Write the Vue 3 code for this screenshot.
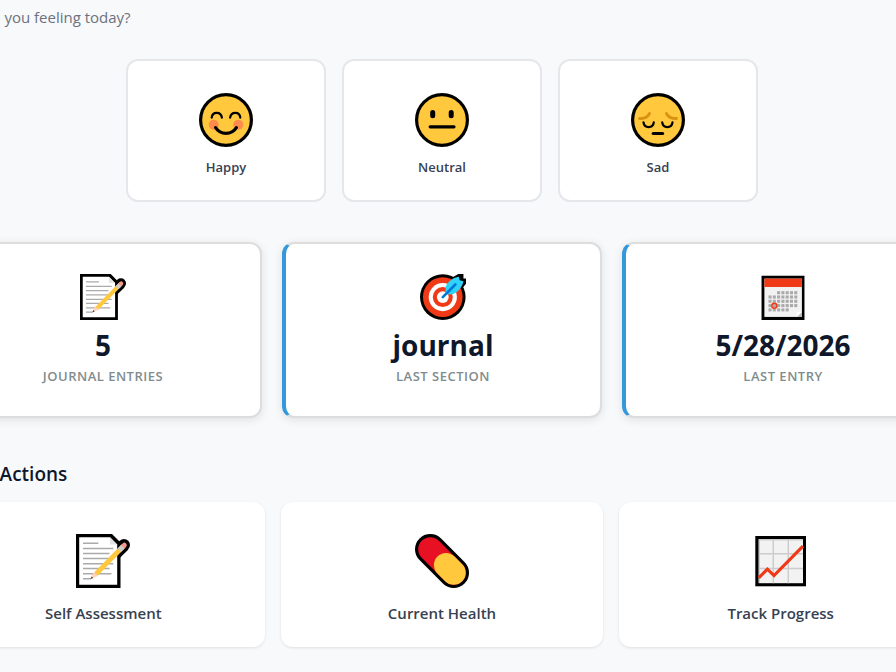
<template>
  <div class="page">
    <main class="dashboard">
      <p class="subtitle">How are you feeling today?</p>

      <div class="mood-options">
        <button v-for="mood in moods" :key="mood.id" type="button" class="mood-card">
          <svg class="icon large" viewBox="0 0 54 54" aria-hidden="true">
            <circle cx="27" cy="27" r="25.4" fill="#ffc83d" stroke="#000" stroke-width="3.2" />
            <g v-if="mood.id === 'happy'" fill="none" stroke="#000" stroke-linecap="round">
              <circle cx="14.7" cy="31.8" r="5" fill="#ff8c4c" stroke="none" />
              <circle cx="39.3" cy="31.8" r="5" fill="#ff8c4c" stroke="none" />
              <path d="M12.7 24.7C13.3 18.2 22 18.2 22.9 24.7M31.1 24.7C32 18.2 40.7 18.2 41.3 24.7" stroke-width="2.2" />
              <path d="M16.6 34.6C21.5 42.3 32.5 42.3 37.4 34.6" stroke-width="3.2" />
            </g>
            <g v-else-if="mood.id === 'neutral'" stroke="#000" stroke-linecap="round">
              <path d="M17.7 19.5V22.7M36.2 19.5V22.7" stroke-width="5" />
              <path d="M15.2 33.8H39" stroke-width="3.2" />
            </g>
            <g v-else fill="none" stroke="#000" stroke-linecap="round">
              <path d="M8.6 25.4C13.5 26 16.8 23.7 18.5 20.6M45.4 25.4C40.5 26 37.2 23.7 35.5 20.6" stroke="#d99312" stroke-width="3" />
              <path d="M12.5 29.4C13.2 35.6 22 35.6 22.8 29.4M31.2 29.4C32 35.6 40.8 35.6 41.5 29.4" stroke-width="2.2" />
              <path d="M22.2 40.5H31.6" stroke-width="3.2" />
            </g>
          </svg>
          <span class="mood-label">{{ mood.label }}</span>
        </button>
      </div>

      <section class="stats">
        <div v-for="stat in stats" :key="stat.label" class="stat-card">
          <svg v-if="stat.icon === 'note'" class="icon" viewBox="0 0 54 54" aria-hidden="true">
            <use href="#note" />
          </svg>
          <svg v-else-if="stat.icon === 'target'" class="icon" viewBox="0 0 45 45" aria-hidden="true">
            <circle cx="22.3" cy="22.6" r="22.3" />
            <path d="M29 5L37.5 0H42.5V4.4H45V9.5L39 17Z" />
            <circle cx="22.3" cy="22.6" r="19.4" fill="#f03a17" />
            <circle cx="22.3" cy="22.6" r="11.8" fill="none" stroke="#fff" stroke-width="4" />
            <circle cx="22.3" cy="22.6" r="5.8" fill="#fff" />
            <path d="M25 20V12.5C27.5 7 32.5 3.3 38 2.7L38.8 6L42.6 7C41.3 12 38 17.8 32 19.7Z" fill="#31d2f7" />
            <path d="M22.3 22.6L34.6 10.3" stroke="#0078d7" stroke-width="2.6" stroke-linecap="round" />
          </svg>
          <svg v-else class="icon" viewBox="0 0 45 45" aria-hidden="true">
            <rect x="1.5" y="1.7" width="42" height="43.3" />
            <rect x="4.3" y="4.5" width="36.7" height="37.5" fill="#f2f2f2" />
            <rect x="4.3" y="4.5" width="36.7" height="8.2" fill="#f03a17" />
            <path d="M36 42L41 37V42Z" fill="#bbb" />
            <path d="M36 42V37H41Z" fill="#fff" />
            <rect v-for="day in days" :key="day.x + '-' + day.y" :x="day.x" :y="day.y" width="3" height="3" fill="#aaa" />
            <circle cx="14" cy="31" r="2.4" fill="none" stroke="#f03a17" stroke-width="1.5" />
          </svg>
          <div class="stat-value">{{ stat.value }}</div>
          <div class="stat-label">{{ stat.label }}</div>
        </div>
      </section>

      <h2 class="section-title">Quick Actions</h2>

      <section class="actions">
        <button v-for="action in actions" :key="action.label" type="button" class="action-card">
          <svg class="icon large" viewBox="0 0 54 54" aria-hidden="true">
            <g v-if="action.icon === 'note'" id="note">
              <path d="M0 0H36L44.5 8.5V54H0Z" />
              <path d="M30 29L48 11.5" stroke="#000" stroke-width="12" />
              <circle cx="48" cy="11" r="6" />
              <path d="M3.2 3.2H34L41.2 10.5V50.8H3.2Z" fill="#fff" />
              <path d="M34 3.2V10.5H41.2Z" fill="#e3e3e3" />
              <path d="M7 9.3H22.3M7 14.5H37.3M7 19.5H33.5M7 24.5H37.3M7 29.7H37.3M7 34.5H33.5M7 39.8H35.5M7 44.8H15" stroke="#aaa" stroke-width="1.4" />
              <path d="M20 40L48 11.5" stroke="#ffc83d" stroke-width="4.8" />
              <path d="M14.5 45L17.8 38L22 42Z" fill="#ffd3b6" />
              <path d="M14.5 45L15.7 42.4L17.2 43.9Z" fill="#333" />
              <path d="M46.8 12.7L48.4 11.1" stroke="#f4978d" stroke-width="4.8" stroke-linecap="round" />
              <path d="M43.3 16.2L46.7 12.8" stroke="#ccc" stroke-width="5" />
            </g>
            <g v-else-if="action.icon === 'pill'" fill="none" stroke-linecap="round">
              <path d="M15.3 15.3L38.7 38.7" stroke="#000" stroke-width="30.6" />
              <path d="M15.3 15.3L38.7 38.7" stroke="#e81123" stroke-width="24.2" />
              <path d="M31 31L38.7 38.7" stroke="#ffc83d" stroke-width="24.2" />
            </g>
            <g v-else fill="none">
              <rect x="1.3" y="2" width="50.7" height="50.3" fill="#000" />
              <rect x="4.8" y="5.2" width="44.2" height="44" fill="#f2f2f2" />
              <path d="M5.3 49V5.7H49M19.3 5.2V49.2M34.3 5.2V49.2M4.8 19.7H49M4.8 34.5H49" stroke="#ccc" stroke-width="1.4" />
              <path d="M4.8 43.8L13.4 35.2L20 41.6L49 12.2" stroke="#f03a17" stroke-width="3.2" />
            </g>
          </svg>
          <span class="action-label">{{ action.label }}</span>
        </button>
      </section>
    </main>
  </div>
</template>

<script setup>
import { ref } from 'vue'

const moods = ref([
  { id: 'happy', label: 'Happy' },
  { id: 'neutral', label: 'Neutral' },
  { id: 'sad', label: 'Sad' }
])

const stats = ref([
  { icon: 'note', value: '5', label: 'Journal Entries' },
  { icon: 'target', value: 'journal', label: 'Last Section' },
  { icon: 'calendar', value: '5/28/2026', label: 'Last Entry' }
])

const actions = ref([
  { icon: 'note', label: 'Self Assessment' },
  { icon: 'pill', label: 'Current Health' },
  { icon: 'chart', label: 'Track Progress' }
])

// Calendar days: first and last column for each week
const weeks = [[2, 6], [0, 6], [0, 6], [0, 6], [0, 4]]
const days = weeks.flatMap(([first, last], row) =>
  Array.from({ length: last - first + 1 }, (_, i) => ({
    x: 8.3 + (first + i) * 4.2,
    y: 16.8 + row * 4.2
  }))
)
</script>

<style>
body {
  margin: 0;
  background-color: #f8f9fb;
}
</style>

<style scoped>
.page {
  min-height: 100vh;
  overflow: hidden;
  font-family: 'Segoe UI', 'Open Sans', 'Noto Sans', sans-serif;
  color: #0f172a;
}

.dashboard {
  margin: 0 -46px 0 -58px;
  padding: 5px 0 24px;
}

.subtitle {
  margin: 0 0 30px;
  font-size: 15px;
  line-height: 24px;
  color: #6b7280;
}

.mood-options {
  display: flex;
  justify-content: center;
  gap: 16px;
  margin-bottom: 40px;
}

.icon {
  display: block;
  width: 46px;
  height: 46px;
}

.icon.large {
  width: 54px;
  height: 54px;
}

button {
  font-family: inherit;
  cursor: pointer;
}

.mood-card {
  display: flex;
  flex-direction: column;
  align-items: center;
  gap: 10px;
  width: 200px;
  padding: 32px 16px 23px;
  box-sizing: border-box;
  background-color: #fff;
  border: 2px solid #e5e7eb;
  border-radius: 12px;
}

.mood-label {
  font-size: 13px;
  font-weight: 600;
  line-height: 20px;
  color: #374151;
}

.stats {
  display: grid;
  grid-template-columns: repeat(3, 1fr);
  gap: 20px;
  margin-bottom: 42px;
}

.stat-card {
  display: flex;
  flex-direction: column;
  align-items: center;
  padding: 30px 24px;
  background-color: #fff;
  border: 2px solid #ddd;
  border-left: 4px solid #3498db;
  border-radius: 12px;
  box-shadow: 0 2px 10px rgba(0, 0, 0, 0.1);
}

.stat-value {
  margin-top: 7px;
  font-size: 28px;
  font-weight: 700;
  line-height: 36px;
}

.stat-label {
  margin-top: 3px;
  font-size: 13px;
  font-weight: 600;
  line-height: 20px;
  letter-spacing: 0.5px;
  text-transform: uppercase;
  color: #7f8c8d;
}

.section-title {
  margin: 0 0 14px;
  font-size: 19px;
  font-weight: 600;
  line-height: 28px;
}

.actions {
  display: grid;
  grid-template-columns: repeat(3, 1fr);
  gap: 16px;
}

.action-card {
  display: flex;
  flex-direction: column;
  align-items: center;
  gap: 14px;
  padding: 32px 24px 23px;
  background-color: #fff;
  border: none;
  border-radius: 12px;
  box-shadow: 0 1px 3px rgba(0, 0, 0, 0.1);
}

.action-label {
  font-size: 15px;
  font-weight: 600;
  line-height: 22px;
  color: #374151;
}
</style>
